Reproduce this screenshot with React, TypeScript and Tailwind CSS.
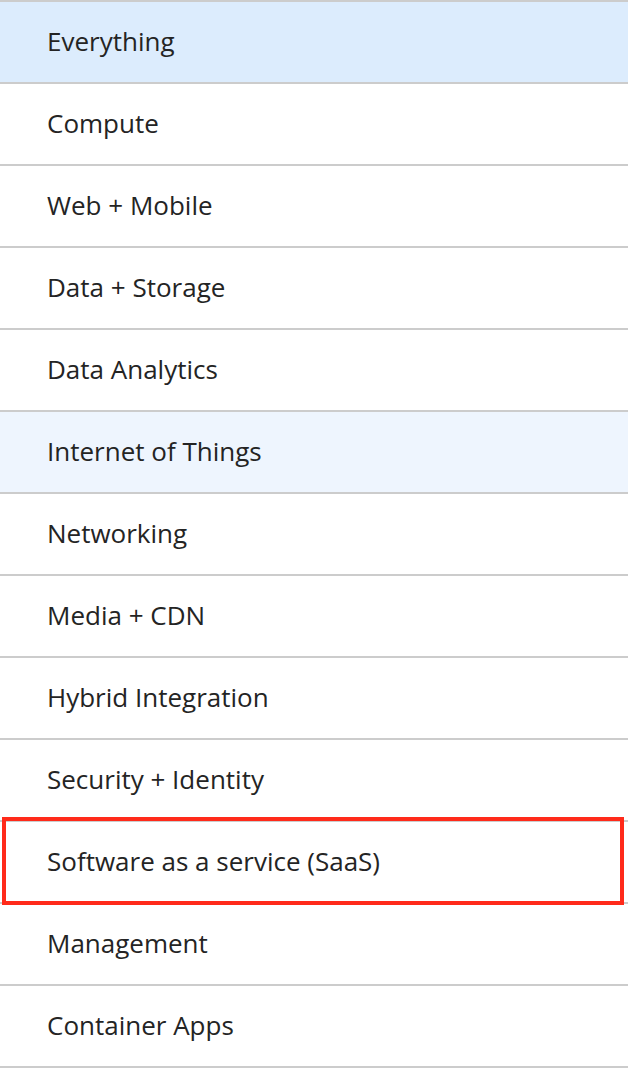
const items = [
  { label: 'Everything', tone: 'selected' },
  { label: 'Compute' },
  { label: 'Web + Mobile' },
  { label: 'Data + Storage' },
  { label: 'Data Analytics' },
  { label: 'Internet of Things', tone: 'hover' },
  { label: 'Networking' },
  { label: 'Media + CDN' },
  { label: 'Hybrid Integration' },
  { label: 'Security + Identity' },
  { label: 'Software as a service (SaaS)', marked: true },
  { label: 'Management' },
  { label: 'Container Apps' },
]

export default function App() {
  return (
    <div className="w-[628px] h-[1072px] bg-white font-['Open_Sans',sans-serif]">
      <ul className="border-b-2 border-[#cccccc]">
        {items.map((item) => (
          <li
            key={item.label}
            className={
              'relative h-[82px] border-t-2 border-[#cccccc] flex items-center pl-[47px] pb-[2px] text-[26px] text-[#242424] ' +
              (item.tone === 'selected'
                ? 'bg-[#dcecfd]'
                : item.tone === 'hover'
                ? 'bg-[#eef5fe]'
                : 'bg-white')
            }
          >
            {item.label}
            {/* annotation box */}
            {item.marked && (
              <div className="absolute z-10 left-[2px] top-[-5px] w-[622px] h-[88px] border-4 border-[#ff2a1a]" />
            )}
          </li>
        ))}
      </ul>
    </div>
  )
}
